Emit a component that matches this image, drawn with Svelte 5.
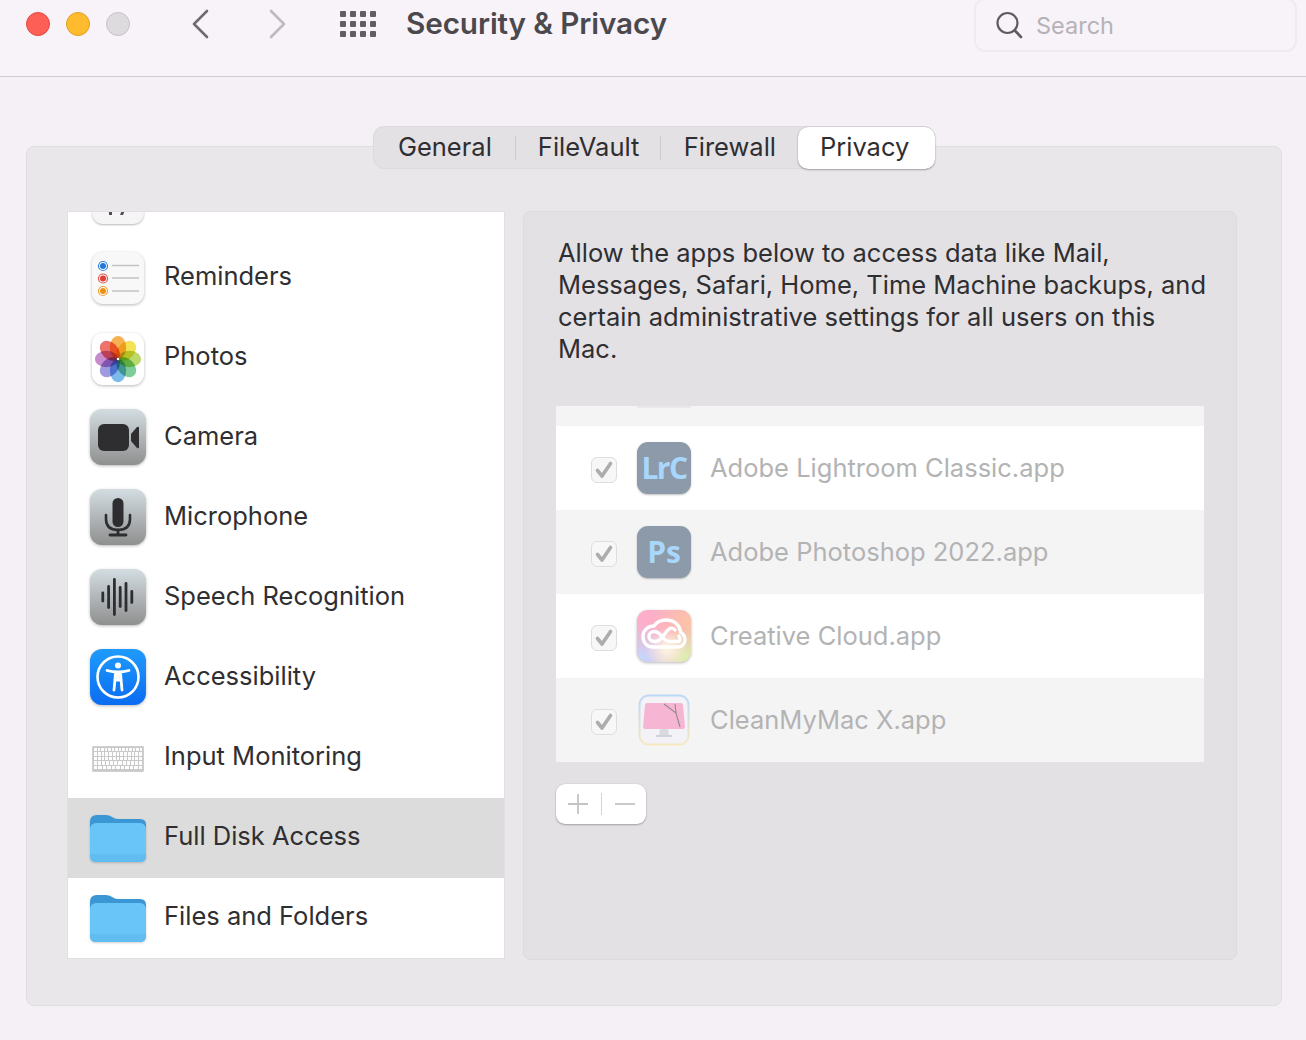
<script>
  const sidebar = [
    { name: 'Reminders', icon: 'reminders' },
    { name: 'Photos', icon: 'photos' },
    { name: 'Camera', icon: 'camera' },
    { name: 'Microphone', icon: 'mic' },
    { name: 'Speech Recognition', icon: 'speech' },
    { name: 'Accessibility', icon: 'access' },
    { name: 'Input Monitoring', icon: 'keyboard' },
    { name: 'Full Disk Access', icon: 'folder', selected: true },
    { name: 'Files and Folders', icon: 'folder' }
  ];
  const apps = [
    { name: 'Adobe Lightroom Classic.app', icon: 'lrc' },
    { name: 'Adobe Photoshop 2022.app', icon: 'ps' },
    { name: 'Creative Cloud.app', icon: 'cc' },
    { name: 'CleanMyMac X.app', icon: 'cmm' }
  ];
  const tabs = [
    { name: 'General', width: 142 },
    { name: 'FileVault', width: 146 },
    { name: 'Firewall', width: 137 },
    { name: 'Privacy', width: 137, active: true }
  ];
  const petals = ['#f5a02c','#f1dc2e','#aed04a','#62c184','#5cacE8','#8a85d6','#bb72c2','#ea544c'];
  const bars = [[12.8,8],[18.6,21],[24.4,35],[30.2,19],[36,27],[41.8,11]];
  const keyRows = [14, 13, 13, 12, 11];
</script>

<div class="window">
  <header class="titlebar">
    <div class="lights">
      <span class="light red"></span>
      <span class="light yellow"></span>
      <span class="light grey"></span>
    </div>
    <div class="nav">
      <svg width="20" height="30" viewBox="0 0 20 30"><path d="M16 2 L3 15 L16 28" fill="none" stroke="#6e6c70" stroke-width="2.6" stroke-linecap="round" stroke-linejoin="round"/></svg>
      <svg width="20" height="30" viewBox="0 0 20 30"><path d="M4 2 L17 15 L4 28" fill="none" stroke="#bdbbc0" stroke-width="2.6" stroke-linecap="round" stroke-linejoin="round"/></svg>
    </div>
    <div class="grid-icon">
      {#each Array(12) as _}<span></span>{/each}
    </div>
    <h1>Security &amp; Privacy</h1>
    <div class="search">
      <svg width="28" height="28" viewBox="0 0 28 28"><circle cx="12.5" cy="12" r="10" fill="none" stroke="#5e5c61" stroke-width="2.2"/><path d="M19.8 19.5 L26 26" stroke="#5e5c61" stroke-width="2.6" stroke-linecap="round"/></svg>
      <span>Search</span>
    </div>
  </header>

  <main class="content">
    <nav class="tabs">
      {#each tabs as tab, i}
        <div class="tab" class:active={tab.active} style="width: {tab.width}px">
          {tab.name}
          {#if i < 2}<i class="divider"></i>{/if}
        </div>
      {/each}
    </nav>

    <section class="panel">
      <div class="sidebar">
        <div class="sidebar-inner">
          <div class="row">
            <div class="icon-slot">
              <div class="calendar-stub"><i class="tick-a"></i><i class="tick-b"></i></div>
            </div>
          </div>
          {#each sidebar as item}
            <div class="row" class:selected={item.selected}>
              <div class="icon-slot">
                {#if item.icon === 'reminders'}
                  <svg width="52" height="52" viewBox="0 0 52 52" class="soft small">
                    <rect width="52" height="52" rx="11" fill="#f9f8f8"/>
                    <circle cx="11" cy="14" r="4.5" fill="#fff" stroke="#2f86e6" stroke-width="1.2"/><circle cx="11" cy="14" r="3" fill="#2477d8"/>
                    <circle cx="11" cy="26.5" r="4.5" fill="#fff" stroke="#e5534b" stroke-width="1.2"/><circle cx="11" cy="26.5" r="3" fill="#df3d35"/>
                    <circle cx="11" cy="39" r="4.5" fill="#fff" stroke="#f0a030" stroke-width="1.2"/><circle cx="11" cy="39" r="3" fill="#ef8f14"/>
                    <path d="M20 13.5H47M20 26H47M20 39H47" stroke="#c2c2c2" stroke-width="1.4"/>
                  </svg>
                {:else if item.icon === 'photos'}
                  <svg width="52" height="52" viewBox="0 0 52 52" class="soft small photo">
                    <rect width="52" height="52" rx="11" fill="#fff"/>
                    <g class="flower">
                      {#each petals as c, i}
                        <ellipse class="petal" cx="26" cy="14.5" rx="8.2" ry="11.5" fill={c} transform="rotate({i * 45} 26 26)"/>
                      {/each}
                    </g>
                    <circle cx="26" cy="26" r="1.3" fill="#fff"/>
                  </svg>
                {:else if item.icon === 'camera'}
                  <svg width="56" height="56" viewBox="0 0 56 56" class="soft">
                    <defs><linearGradient id="gc" x1="0" y1="0" x2="0" y2="1"><stop offset="0" stop-color="#d3dde2"/><stop offset="1" stop-color="#8f8f8f"/></linearGradient></defs>
                    <rect width="56" height="56" rx="12" fill="url(#gc)"/>
                    <rect x="8" y="15" width="31" height="27" rx="6" fill="#2e2e30"/>
                    <path d="M41 25 L47 18 Q49 17 49 19 V38 Q49 40 47 39 L41 32Z" fill="#2e2e30"/>
                  </svg>
                {:else if item.icon === 'mic'}
                  <svg width="56" height="56" viewBox="0 0 56 56" class="soft">
                    <defs><linearGradient id="gm" x1="0" y1="0" x2="0" y2="1"><stop offset="0" stop-color="#d3dde2"/><stop offset="1" stop-color="#8f8f8f"/></linearGradient></defs>
                    <rect width="56" height="56" rx="12" fill="url(#gm)"/>
                    <rect x="22.5" y="9" width="11" height="29" rx="5.5" fill="#2e2e30"/>
                    <path d="M16 26 V30 Q16 41 28 41 Q40 41 40 30 V26" fill="none" stroke="#2e2e30" stroke-width="2.6" stroke-linecap="round"/>
                    <path d="M28 41 V46 M20 46 H36" stroke="#2e2e30" stroke-width="2.8" stroke-linecap="round"/>
                  </svg>
                {:else if item.icon === 'speech'}
                  <svg width="56" height="56" viewBox="0 0 56 56" class="soft">
                    <defs><linearGradient id="gs" x1="0" y1="0" x2="0" y2="1"><stop offset="0" stop-color="#d3dde2"/><stop offset="1" stop-color="#8f8f8f"/></linearGradient></defs>
                    <rect width="56" height="56" rx="12" fill="url(#gs)"/>
                    {#each bars as b}
                      <line x1={b[0]} x2={b[0]} y1={28 - b[1] / 2} y2={28 + b[1] / 2} stroke="#2e2e30" stroke-width="2.8" stroke-linecap="round"/>
                    {/each}
                  </svg>
                {:else if item.icon === 'access'}
                  <svg width="56" height="56" viewBox="0 0 56 56" class="soft">
                    <defs><linearGradient id="ga" x1="0" y1="0" x2="0" y2="1"><stop offset="0" stop-color="#1f9bfb"/><stop offset="1" stop-color="#0a6cf2"/></linearGradient></defs>
                    <rect width="56" height="56" rx="12" fill="url(#ga)"/>
                    <circle cx="28" cy="28" r="20.5" fill="none" stroke="#fff" stroke-width="2.6"/>
                    <circle cx="28" cy="16.5" r="3" fill="#fff"/>
                    <path d="M17 21.5 Q28 24.5 39 21.5 M28 23.5 V31 M25.5 24 L24 41 M30.5 24 L32 41 M25.5 31 H30.5" fill="none" stroke="#fff" stroke-width="2.8" stroke-linecap="round"/>
                  </svg>
                {:else if item.icon === 'keyboard'}
                  <div class="keyboard">
                    {#each keyRows as n}
                      <div class="key-row">
                        {#each Array(n) as _}<span></span>{/each}
                      </div>
                    {/each}
                  </div>
                {:else}
                  <svg width="56" height="48" viewBox="0 0 56 48" class="folder">
                    <path d="M0 8 Q0 1 7 1 H16 Q20 1 23 3.5 Q25 5 29 5 H50 Q56 5 56 11 V24 H0Z" fill="#3a97d4"/>
                    <rect y="9" width="56" height="39" rx="6" fill="#69c4f8"/>
                    <path d="M0 40 H56 V42 Q56 48 50 48 H6 Q0 48 0 42Z" fill="#61bcf0"/>
                  </svg>
                {/if}
              </div>
              <span class="label">{item.name}</span>
            </div>
          {/each}
        </div>
      </div>

      <div class="pane">
        <p>Allow the apps below to access data like Mail, Messages, Safari, Home, Time Machine backups, and certain administrative settings for all users on this Mac.</p>
        <div class="apps">
          <div class="apps-stub"><i></i></div>
          {#each apps as app}
            <div class="app">
              <div class="check">
                <svg width="22" height="20" viewBox="0 0 22 20"><path d="M4.5 10.5 L9 16 L17.5 3.5" fill="none" stroke="#adadad" stroke-width="3.6" stroke-linecap="round" stroke-linejoin="round"/></svg>
              </div>
              <div class="app-icon">
                {#if app.icon === 'lrc'}
                  <div class="adobe lrc">LrC</div>
                {:else if app.icon === 'ps'}
                  <div class="adobe">Ps</div>
                {:else if app.icon === 'cc'}
                  <svg width="54" height="52" viewBox="0 0 54 52" class="soft">
                    <defs>
                      <radialGradient id="cc1" cx="0.1" cy="0.95" r="0.7"><stop offset="0" stop-color="#c2d8ff"/><stop offset="1" stop-color="#c2d8ff" stop-opacity="0"/></radialGradient>
                      <radialGradient id="cc2" cx="0.95" cy="0.95" r="0.65"><stop offset="0" stop-color="#d6f5a8"/><stop offset="1" stop-color="#d6f5a8" stop-opacity="0"/></radialGradient>
                      <radialGradient id="cc3" cx="0.95" cy="0.2" r="0.7"><stop offset="0" stop-color="#fcc3a6"/><stop offset="1" stop-color="#fcc3a6" stop-opacity="0"/></radialGradient>
                      <radialGradient id="cc4" cx="0.55" cy="0.75" r="0.4"><stop offset="0" stop-color="#fff6e4"/><stop offset="1" stop-color="#fff6e4" stop-opacity="0"/></radialGradient>
                    </defs>
                    <rect width="54" height="52" rx="11" fill="#fdaeca"/>
                    <rect width="54" height="52" rx="11" fill="url(#cc3)"/>
                    <rect width="54" height="52" rx="11" fill="url(#cc1)"/>
                    <rect width="54" height="52" rx="11" fill="url(#cc2)"/>
                    <rect width="54" height="52" rx="11" fill="url(#cc4)"/>
                    <g fill="none" stroke="#fff" stroke-width="3.4" stroke-linecap="round" stroke-linejoin="round">
                      <path d="M16 37 C9.5 37 6 32 6 26.5 C6 20 11.5 16 17 16 C20 11.5 25 10 29 10 C38 10 43 16 43.5 22 C46.5 24 48 27 48 30 C48 34 44.5 37 41 37 Z"/>
                      <path d="M18 31.5 C14 31.5 12 29 12 26.5 C12 23.5 14.5 21.5 17.5 21.5 C21 21.5 23 24 25 26.5 L27 29 C29 31.5 32 31.5 35 31.5 H41 C43.5 31.5 43.5 28 42 26"/>
                      <path d="M18 31.5 C21 31.5 23 30 25 27.5 L30 21 C32 18.5 35 16.5 38 20"/>
                    </g>
                  </svg>
                {:else}
                  <svg width="54" height="52" viewBox="-1 0 54 52">
                    <defs><linearGradient id="gb" x1="0" y1="0" x2="0" y2="1"><stop offset="0" stop-color="#bcd8f7"/><stop offset="1" stop-color="#f7e7bd"/></linearGradient></defs>
                    <rect x="1.5" y="1.5" width="49" height="49" rx="9" fill="#f2f2f7" stroke="url(#gb)" stroke-width="2"/>
                    <path d="M7 11 Q7 9 9 9 H43 Q45 9 45 11 L47 33 Q47 35 45 35 H7 Q5 35 5 33Z" fill="#f6b5d3"/>
                    <path d="M22 35 H30 L31 41 H21Z" fill="#d9dbe0"/><path d="M18 42 H34" stroke="#c8cacf" stroke-width="1.6"/>
                    <path d="M26 10 L38 19 L42 33 M38 19 L37 10" fill="none" stroke="#8d8a90" stroke-width="1.1"/>
                  </svg>
                {/if}
              </div>
              <span class="app-name">{app.name}</span>
            </div>
          {/each}
        </div>
        <div class="buttons">
          <svg width="22" height="22" viewBox="0 0 22 22"><path d="M11 1V21M1 11H21" stroke="#c4c4c4" stroke-width="1.8"/></svg>
          <i></i>
          <svg width="22" height="22" viewBox="0 0 22 22"><path d="M1 11H21" stroke="#c4c4c4" stroke-width="1.8"/></svg>
        </div>
      </div>
    </section>
  </main>
</div>

<style>
  :global(body) {
    margin: 0;
    background: #f4f0f5;
  }
  .window {
    width: 1306px;
    height: 1040px;
    overflow: hidden;
    font-family: Inter, "Liberation Sans", sans-serif;
    color: #2b2a2d;
    background: #f4f0f5;
  }
  .titlebar {
    height: 76px;
    border-bottom: 1px solid #d0cdd1;
    background: #f7f3f8;
    display: flex;
    align-items: flex-start;
    padding-left: 26px;
    box-sizing: content-box;
  }
  .lights {
    display: flex;
    gap: 16px;
    margin-top: 12px;
  }
  .light {
    width: 24px;
    height: 24px;
    border-radius: 50%;
    box-sizing: border-box;
  }
  .red { background: #fd5f57; border: 1px solid #e5473f; }
  .yellow { background: #fdbb2d; border: 1px solid #e0a125; }
  .grey { background: #dddbde; border: 1px solid #c5c3c7; }
  .nav {
    display: flex;
    gap: 56px;
    margin: 9px 0 0 61px;
  }
  .grid-icon {
    display: grid;
    grid-template-columns: repeat(4, 6px);
    grid-template-rows: repeat(3, 6px);
    gap: 4px;
    margin: 11px 0 0 53px;
  }
  .grid-icon span {
    background: #605e63;
    border-radius: 1px;
  }
  h1 {
    margin: 5px 0 0 30px;
    font-size: 29.7px;
    line-height: 36px;
    font-weight: 600;
    color: #4b494d;
    letter-spacing: -0.1px;
    white-space: nowrap;
  }
  .search {
    position: relative;
    margin: -2px 9px 0 auto;
    width: 323px;
    height: 54px;
    box-sizing: border-box;
    border: 2px solid #eeebef;
    border-radius: 11px;
    display: flex;
    align-items: center;
    gap: 13px;
    padding: 0 0 0 19px;
  }
  .search svg { margin-top: -1px; }
  .search span {
    font-size: 23.5px;
    color: #b5b2b7;
  }
  .content {
    padding: 49px 24px 0 26px;
  }
  .tabs {
    position: relative;
    z-index: 1;
    display: flex;
    width: 562px;
    height: 43px;
    margin: 0 0 -23px 347px;
    box-sizing: border-box;
    background: #e3e1e4;
    border: 1px solid #dcdadd;
    border-radius: 11px;
  }
  .tab {
    position: relative;
    display: flex;
    align-items: center;
    justify-content: center;
    font-size: 25.5px;
    color: #2f2e31;
    box-sizing: border-box;
    padding-bottom: 2px;
  }
  .tab.active {
    background: #fff;
    border-radius: 10px;
    margin: 0 -1px 0 0;
    height: 42px;
    box-shadow: 0 1px 2px rgba(0, 0, 0, 0.3), 0 0 1px rgba(0, 0, 0, 0.25);
    padding: 0 4px 4px 0;
  }
  .divider {
    position: absolute;
    right: 0;
    top: 9px;
    height: 24px;
    width: 1px;
    background: #ccc9cd;
  }
  .panel {
    height: 860px;
    box-sizing: border-box;
    background: #e9e7ea;
    border: 1px solid #e0dee1;
    border-radius: 8px;
    display: flex;
    padding: 65px 43px 45px 41px;
    gap: 19px;
  }
  .sidebar {
    width: 436px;
    height: 746px;
    background: #fff;
    overflow: hidden;
    box-shadow: 0 0 0 1px #e1dfe2;
    flex: none;
  }
  .sidebar-inner {
    margin-top: -54px;
  }
  .row {
    height: 80px;
    display: flex;
    align-items: center;
  }
  .row.selected {
    background: #dcdcdc;
  }
  .icon-slot {
    width: 96px;
    padding-left: 22px;
    box-sizing: border-box;
    display: flex;
    justify-content: flex-start;
  }
  .icon-slot > svg { display: block; margin-top: -2px; }
  .icon-slot > .small { margin-left: 2px; margin-top: 0; }
  .icon-slot > .photo { margin-top: 2px; }
  .soft { filter: drop-shadow(0 1px 1.5px rgba(0, 0, 0, 0.28)); }
  .flower { isolation: isolate; }
  .petal { mix-blend-mode: multiply; opacity: 0.82; }
  .icon-slot > .folder { margin-top: 0; filter: drop-shadow(0 1px 1px rgba(0, 0, 0, 0.18)); }
  .calendar-stub {
    width: 52px;
    height: 52px;
    margin-left: 2px;
    margin-top: -1px;
    border-radius: 11px;
    background: #f6f5f5;
    box-shadow: 0 1px 2px rgba(0, 0, 0, 0.28);
    position: relative;
    overflow: hidden;
  }
  .calendar-stub i {
    position: absolute;
    bottom: 9px;
    width: 3px;
    height: 5px;
    background: #4d4d4d;
  }
  .tick-a { left: 17px; }
  .tick-b { left: 29px; transform: skewX(-20deg); }
  .keyboard {
    width: 52px;
    height: 26px;
    margin-left: 2px;
    margin-top: 1px;
    background: #c9c9c9;
    border: 1px solid #cfcfcf;
    border-radius: 1px;
    box-sizing: border-box;
    display: flex;
    flex-direction: column;
    gap: 1px;
    padding: 1px;
  }
  .key-row {
    flex: 1;
    display: flex;
    gap: 1px;
  }
  .key-row span {
    flex: 1;
    background: #fdfdfd;
  }
  .label {
    font-size: 25.5px;
    color: #2f2e31;
    margin-bottom: 6px;
    white-space: nowrap;
  }
  .pane {
    width: 714px;
    height: 749px;
    margin-top: -1px;
    box-sizing: border-box;
    background: #e3e1e4;
    border: 1px solid #dcdadd;
    border-radius: 8px;
    padding: 25px 32px 0 32px;
    flex: none;
  }
  .pane p {
    margin: 0;
    width: 660px;
    margin-left: 2px;
    font-size: 25.5px;
    line-height: 32px;
    color: #2f2e31;
  }
  .apps {
    width: 648px;
    margin-top: 41px;
  }
  .apps-stub {
    height: 20px;
    background: #f4f4f5;
    overflow: hidden;
  }
  .apps-stub i {
    display: block;
    width: 54px;
    height: 2px;
    margin-left: 81px;
    background: #e9e8ea;
  }
  .app {
    height: 84px;
    display: flex;
    align-items: center;
    background: #fff;
  }
  .app:nth-child(odd) {
    background: #f4f4f5;
  }
  .check {
    width: 26px;
    height: 26px;
    margin: 4px 0 0 35px;
    box-sizing: border-box;
    border: 1px solid #dedede;
    border-radius: 6px;
    background: #f7f7f7;
    display: flex;
    align-items: center;
    justify-content: center;
  }
  .app-icon {
    width: 54px;
    height: 52px;
    margin-left: 20px;
  }
  .app-icon svg { display: block; }
  .adobe {
    width: 54px;
    height: 52px;
    border-radius: 11px;
    background: #8c9aa9;
    color: #a9d6fb;
    font: 700 30px/52px "Open Sans", sans-serif;
    text-align: center;
    box-shadow: 0 1px 2px rgba(0, 0, 0, 0.25);
  }
  .lrc {
    letter-spacing: -1.5px;
  }
  .app-name {
    font-size: 25.5px;
    color: #b3b3b4;
    margin: 0 0 2px 19px;
    white-space: nowrap;
  }
  .buttons {
    width: 90px;
    height: 40px;
    margin-top: 22px;
    box-sizing: border-box;
    background: #fff;
    border-radius: 9px;
    box-shadow: 0 1px 2px rgba(0, 0, 0, 0.28), 0 0 1px rgba(0, 0, 0, 0.2);
    display: flex;
    align-items: center;
    justify-content: center;
    gap: 12px;
  }
  .buttons i {
    width: 1px;
    height: 22px;
    background: #d5d5d5;
  }
</style>
